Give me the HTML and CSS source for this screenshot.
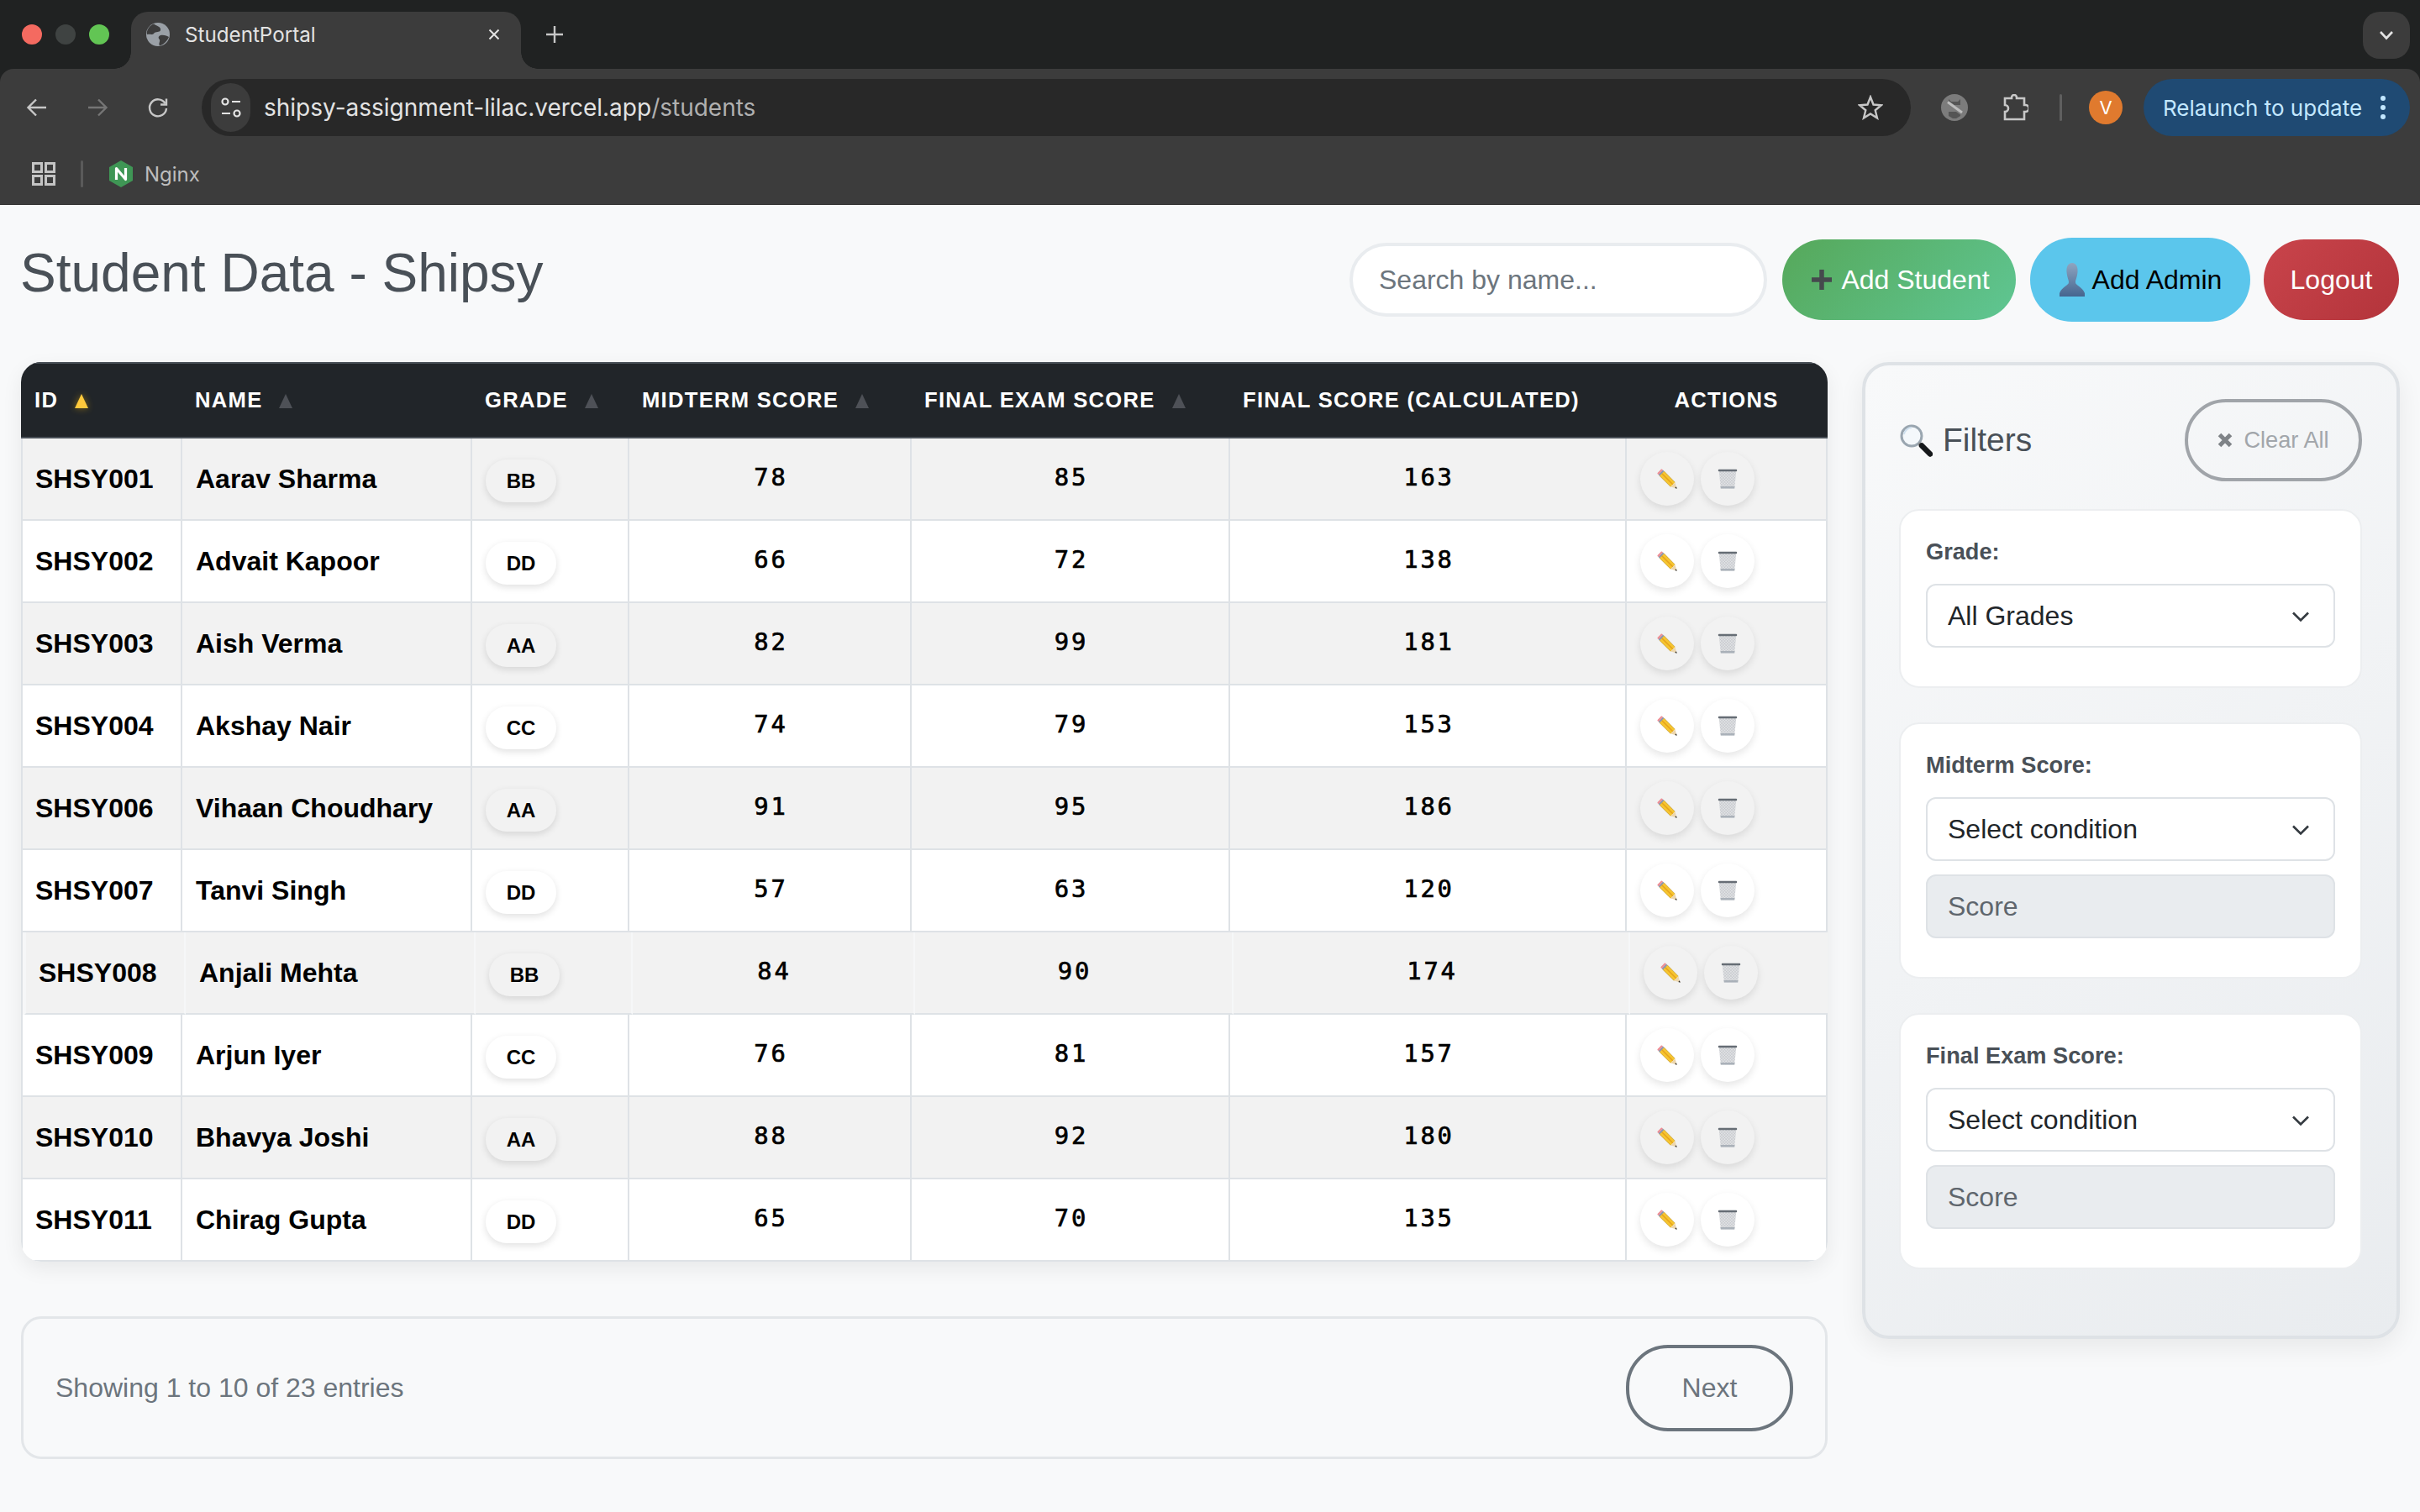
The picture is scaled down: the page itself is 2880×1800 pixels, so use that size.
FILE: index.html
```html
<!DOCTYPE html>
<html lang="en">
<head>
<meta charset="utf-8">
<title>StudentPortal</title>
<link rel="stylesheet" href="styles.css">
</head>
<body>
<svg class="defs" aria-hidden="true">
  <defs>
    <pattern id="mesh" width="2.4" height="2.4" patternUnits="userSpaceOnUse" patternTransform="rotate(45)">
      <rect width="2.4" height="2.4" fill="#e2e4e6"/>
      <path d="M0 0H2.4M0 0V2.4" stroke="#a9aeb4" stroke-width=".6"/>
    </pattern>
    <linearGradient id="bust" x1="0" y1="0" x2="0" y2="1">
      <stop offset="0" stop-color="#8fa5c0"/>
      <stop offset="1" stop-color="#45658f"/>
    </linearGradient>
    <symbol id="i-pencil" viewBox="0 0 24 24">
      <path d="M2.800 8.200 8.200 2.800 21.400 16.200 16.200 21.400Z" fill="#f6c52f"/>
      <path d="M5.500 5.500 18.800 18.800" stroke="#e5a21d" stroke-width="1.500"/>
      <path d="M2.800 8.200 16.200 21.400M8.200 2.800 21.400 16.200" stroke="#a87f1c" stroke-width=".5"/>
      <path d="M1.600 7 7 1.600 8.400 3 3 8.400Z" fill="#8b93a8"/>
      <path d="M.6 5 5 .6C5.600.2 6.200.6 7 1.600L1.600 7C.6 6.200.2 5.600.6 5Z" fill="#ee8c94"/>
      <path d="M16.200 21.400 21.400 16.200 23.600 23.600Z" fill="#ecd6ad"/>
      <path d="M21.300 22.900 22.900 21.300 23.700 23.700Z" fill="#222"/>
    </symbol>
    <symbol id="i-trash" viewBox="0 0 24 24">
      <path d="M1.800 3 22.200 3 20.200 23.400 3.800 23.400Z" fill="url(#mesh)"/>
      <path d="M3.500 21H20.500L20.200 23.400H3.800Z" fill="#aab1b9"/>
      <rect x=".8" y=".8" width="22.400" height="2.400" rx="1" fill="#666d75"/>
    </symbol>
    <symbol id="i-lens" viewBox="0 0 40 40">
      <circle cx="15" cy="15" r="12" fill="#f4f8fb" stroke="#9aa6b0" stroke-width="3"/>
      <path d="M6 13a9.500 9.500 0 0 1 9-8" fill="none" stroke="#cfe0ee" stroke-width="2"/>
      <path d="M23.500 23.500 27 27" stroke="#8e8e8e" stroke-width="3.500"/>
      <path d="M27 26.500 37 36.500" stroke="#15181b" stroke-width="6.500" stroke-linecap="round"/>
    </symbol>
    <symbol id="i-chevron" viewBox="0 0 22 14">
      <path d="M2 2.500 11 11.500 20 2.500" fill="none" stroke="#343a40" stroke-width="2.600"/>
    </symbol>
  </defs>
</svg>

<header class="browser">
  <div class="tabstrip">
    <div class="lights">
      <span class="light light-red"></span>
      <span class="light light-off"></span>
      <span class="light light-green"></span>
    </div>
    <div class="tab">
      <svg class="favicon" viewBox="0 0 28 28">
        <circle cx="14" cy="14" r="14" fill="#9aa0a6"/>
        <path d="M9 1.500C13 4 18 5 17 9 16 12 11 10 9 13 7 15 4 13 1 14 0 9 4 3 9 1.500ZM17 15C21 14 25 16 27 17 25 22 21 26 16 27.500 14 24 18 22 15 19 14 17.500 15 15.500 17 15Z" fill="#3c3c3c"/>
      </svg>
      <span class="tab-title">StudentPortal</span>
      <svg class="tab-close" viewBox="0 0 16 16"><path d="M2.500 2.500 13.500 13.500M13.500 2.500 2.500 13.500" stroke="#e3e3e3" stroke-width="2"/></svg>
    </div>
    <svg class="newtab" viewBox="0 0 22 22"><path d="M11 1V21M1 11H21" stroke="#c7c7c7" stroke-width="2.400"/></svg>
    <div class="tabmenu">
      <svg viewBox="0 0 18 12"><path d="M2 2 9 9.500 16 2" fill="none" stroke="#e3e3e3" stroke-width="2.600"/></svg>
    </div>
  </div>

  <div class="toolbar">
    <span class="tool"><svg viewBox="0 0 26 26"><path d="M24 13H3M12 3.500 2.500 13 12 22.500" fill="none" stroke="#c7c7c7" stroke-width="2.400"/></svg></span>
    <span class="tool"><svg viewBox="0 0 26 26"><path d="M2 13H23M14 3.500 23.500 13 14 22.500" fill="none" stroke="#757575" stroke-width="2.400"/></svg></span>
    <span class="tool"><svg viewBox="0 0 26 26"><path d="M21.500 8A10 10 0 1 0 23 14" fill="none" stroke="#c7c7c7" stroke-width="2.400"/><path d="M23 2.500V9.500H16" fill="none" stroke="#c7c7c7" stroke-width="2.400"/></svg></span>
    <div class="urlbar">
      <span class="siteinfo">
        <svg viewBox="0 0 26 26"><circle cx="6" cy="6" r="3.500" fill="none" stroke="#e3e3e3" stroke-width="2.200"/><path d="M14 6H24M2 20H12" stroke="#e3e3e3" stroke-width="2.200"/><circle cx="20" cy="20" r="3.500" fill="none" stroke="#e3e3e3" stroke-width="2.200"/></svg>
      </span>
      <span class="url">shipsy-assignment-lilac.vercel.app<span class="url-path">/students</span></span>
      <svg class="star" viewBox="0 0 30 30"><path d="M15 2.500 18.500 11.500 28 12.200 20.700 18.300 23 27.500 15 22.500 7 27.500 9.300 18.300 2 12.200 11.500 11.500Z" fill="none" stroke="#c7c7c7" stroke-width="2.400"/></svg>
    </div>
    <span class="tool tool-ext">
      <svg viewBox="0 0 32 32"><circle cx="16" cy="16" r="16" fill="#7c7c7c"/><path d="M9 6 12 9H20L23 6 23 13 9 13ZM9 21 23 21 23 26 18 29H14L9 26Z" fill="#555"/><path d="M7 10 25 23" stroke="#7c7c7c" stroke-width="5"/><path d="M8 9.500 25 22" stroke="#bdbdbd" stroke-width="3"/></svg>
    </span>
    <span class="tool tool-ext">
      <svg viewBox="0 0 32 32"><path d="M4 5H12V4A3 3 0 0 1 18 4V5H27V13H28.500A3 3 0 0 1 28.500 21H27V30H4V21A4 4 0 0 0 4 13Z" fill="none" stroke="#c7c7c7" stroke-width="2.600"/></svg>
    </span>
    <span class="tool-divider"></span>
    <span class="avatar">V</span>
    <div class="relaunch">
      <span>Relaunch to update</span>
      <span class="kebab"><i></i><i></i><i></i></span>
    </div>
  </div>

  <div class="bookmarks">
    <svg class="apps" viewBox="0 0 28 28"><path d="M1.500 1.500H11.500V11.500H1.500ZM16.500 1.500H26.500V11.500H16.500ZM1.500 16.500H11.500V26.500H1.500ZM16.500 16.500H26.500V26.500H16.500Z" fill="none" stroke="#c4c4c4" stroke-width="3"/></svg>
    <span class="bm-divider"></span>
    <svg class="nginx" viewBox="0 0 28 32"><path d="M14 0 28 8V24L14 32 0 24V8Z" fill="#3f9655"/><path d="M8.500 23V9.500L19.500 22.500V9" fill="none" stroke="#fff" stroke-width="3.200" stroke-linejoin="round"/></svg>
    <span class="bm-label">Nginx</span>
  </div>
</header>

<main class="page">
  <div class="page-head">
    <h1 class="page-title">Student Data - Shipsy</h1>
    <div class="page-actions">
      <input class="search" type="text" placeholder="Search by name...">
      <button class="btn btn-add" type="button"><svg class="btn-ico plus" viewBox="0 0 24 24"><path d="M12 0V24M0 12H24" stroke="#45494d" stroke-width="5.500"/></svg>Add Student</button>
      <button class="btn btn-admin" type="button"><svg class="btn-ico bust" viewBox="0 0 32 40"><path d="M16 0C21 0 23 5 22.500 11 22 17 20 20 20 23 20 27 28 28 31 36V40H1V36C4 28 12 27 12 23 12 20 10 17 9.500 11 9 5 11 0 16 0Z" fill="url(#bust)"/></svg>Add Admin</button>
      <button class="btn btn-logout" type="button">Logout</button>
    </div>
  </div>

  <div class="content">
    <div class="left">
      <div class="table-wrap">
        <table class="students">
          <colgroup>
            <col class="c-id"><col class="c-name"><col class="c-grade"><col class="c-mid"><col class="c-final"><col class="c-calc"><col class="c-act">
          </colgroup>
          <thead>
            <tr>
              <th>ID<span class="sort sort-on"></span></th>
              <th>NAME<span class="sort"></span></th>
              <th>GRADE<span class="sort"></span></th>
              <th>MIDTERM SCORE<span class="sort"></span></th>
              <th>FINAL EXAM SCORE<span class="sort"></span></th>
              <th>FINAL SCORE (CALCULATED)</th>
              <th class="th-center">ACTIONS</th>
            </tr>
          </thead>
          <tbody>
            <tr>
              <td class="id">SHSY001</td><td class="name">Aarav Sharma</td><td><span class="badge">BB</span></td><td class="num">78</td><td class="num">85</td><td class="num">163</td>
              <td class="acts"><span class="round"><svg><use href="#i-pencil"/></svg></span><span class="round"><svg><use href="#i-trash"/></svg></span></td>
            </tr>
            <tr>
              <td class="id">SHSY002</td><td class="name">Advait Kapoor</td><td><span class="badge">DD</span></td><td class="num">66</td><td class="num">72</td><td class="num">138</td>
              <td class="acts"><span class="round"><svg><use href="#i-pencil"/></svg></span><span class="round"><svg><use href="#i-trash"/></svg></span></td>
            </tr>
            <tr>
              <td class="id">SHSY003</td><td class="name">Aish Verma</td><td><span class="badge">AA</span></td><td class="num">82</td><td class="num">99</td><td class="num">181</td>
              <td class="acts"><span class="round"><svg><use href="#i-pencil"/></svg></span><span class="round"><svg><use href="#i-trash"/></svg></span></td>
            </tr>
            <tr>
              <td class="id">SHSY004</td><td class="name">Akshay Nair</td><td><span class="badge">CC</span></td><td class="num">74</td><td class="num">79</td><td class="num">153</td>
              <td class="acts"><span class="round"><svg><use href="#i-pencil"/></svg></span><span class="round"><svg><use href="#i-trash"/></svg></span></td>
            </tr>
            <tr>
              <td class="id">SHSY006</td><td class="name">Vihaan Choudhary</td><td><span class="badge">AA</span></td><td class="num">91</td><td class="num">95</td><td class="num">186</td>
              <td class="acts"><span class="round"><svg><use href="#i-pencil"/></svg></span><span class="round"><svg><use href="#i-trash"/></svg></span></td>
            </tr>
            <tr>
              <td class="id">SHSY007</td><td class="name">Tanvi Singh</td><td><span class="badge">DD</span></td><td class="num">57</td><td class="num">63</td><td class="num">120</td>
              <td class="acts"><span class="round"><svg><use href="#i-pencil"/></svg></span><span class="round"><svg><use href="#i-trash"/></svg></span></td>
            </tr>
            <tr class="is-hover">
              <td class="id">SHSY008</td><td class="name">Anjali Mehta</td><td><span class="badge">BB</span></td><td class="num">84</td><td class="num">90</td><td class="num">174</td>
              <td class="acts"><span class="round"><svg><use href="#i-pencil"/></svg></span><span class="round"><svg><use href="#i-trash"/></svg></span></td>
            </tr>
            <tr>
              <td class="id">SHSY009</td><td class="name">Arjun Iyer</td><td><span class="badge">CC</span></td><td class="num">76</td><td class="num">81</td><td class="num">157</td>
              <td class="acts"><span class="round"><svg><use href="#i-pencil"/></svg></span><span class="round"><svg><use href="#i-trash"/></svg></span></td>
            </tr>
            <tr>
              <td class="id">SHSY010</td><td class="name">Bhavya Joshi</td><td><span class="badge">AA</span></td><td class="num">88</td><td class="num">92</td><td class="num">180</td>
              <td class="acts"><span class="round"><svg><use href="#i-pencil"/></svg></span><span class="round"><svg><use href="#i-trash"/></svg></span></td>
            </tr>
            <tr>
              <td class="id">SHSY011</td><td class="name">Chirag Gupta</td><td><span class="badge">DD</span></td><td class="num">65</td><td class="num">70</td><td class="num">135</td>
              <td class="acts"><span class="round"><svg><use href="#i-pencil"/></svg></span><span class="round"><svg><use href="#i-trash"/></svg></span></td>
            </tr>
          </tbody>
        </table>
      </div>

      <div class="pager">
        <span class="pager-info">Showing 1 to 10 of 23 entries</span>
        <button class="btn-next" type="button">Next</button>
      </div>
    </div>

    <aside class="filters">
      <div class="filters-head">
        <h2 class="filters-title"><svg class="lens"><use href="#i-lens"/></svg>Filters</h2>
        <button class="btn-clear" type="button"><svg class="clear-x" viewBox="0 0 18 18"><path d="M2.500 2.500 15.500 15.500M15.500 2.500 2.500 15.500" stroke="#7f8387" stroke-width="5"/></svg>Clear All</button>
      </div>

      <section class="fcard">
        <label class="flabel">Grade:</label>
        <div class="selectwrap">
          <select class="fselect"><option>All Grades</option></select>
          <svg class="chev"><use href="#i-chevron"/></svg>
        </div>
      </section>

      <section class="fcard">
        <label class="flabel">Midterm Score:</label>
        <div class="selectwrap">
          <select class="fselect"><option>Select condition</option></select>
          <svg class="chev"><use href="#i-chevron"/></svg>
        </div>
        <input class="fscore" type="text" placeholder="Score" disabled>
      </section>

      <section class="fcard">
        <label class="flabel">Final Exam Score:</label>
        <div class="selectwrap">
          <select class="fselect"><option>Select condition</option></select>
          <svg class="chev"><use href="#i-chevron"/></svg>
        </div>
        <input class="fscore" type="text" placeholder="Score" disabled>
      </section>
    </aside>
  </div>
</main>
</body>
</html>
```

FILE: styles.css
```css
* { box-sizing: border-box; }
html, body { margin: 0; height: 1800px; overflow: hidden; }
body { background: #f8f9fa; font-family: "Liberation Sans", Arial, sans-serif; color: #212529; }
.defs { position: absolute; width: 0; height: 0; }

/* browser chrome */
.browser { background: #202222; font-family: Inter, "Liberation Sans", sans-serif; }
.tabstrip { display: flex; align-items: flex-start; height: 82px; padding-top: 14px; }
.lights { display: flex; gap: 16px; margin: 15px 0 0 26px; }
.light { width: 24px; height: 24px; border-radius: 50%; }
.light-red { background: #f46a60; }
.light-off { background: #3f4342; }
.light-green { background: #62c554; }
.tab { position: relative; display: flex; align-items: center; width: 464px; height: 68px; margin-left: 26px; padding: 0 24px 14px 18px; background: #3c3c3c; border-radius: 20px 20px 0 0; }
.tab::before, .tab::after { content: ""; position: absolute; bottom: 0; width: 20px; height: 20px; }
.tab::before { left: -20px; background: radial-gradient(circle at 0 0, transparent 19.500px, #3c3c3c 20px); }
.tab::after { right: -20px; background: radial-gradient(circle at 100% 0, transparent 19.500px, #3c3c3c 20px); }
.favicon { width: 28px; height: 28px; flex: none; }
.tab-title { margin-left: 18px; font-size: 24.200px; color: #e3e3e3; }
.tab-close { width: 16px; height: 16px; margin-left: auto; }
.newtab { width: 22px; height: 22px; margin: 16px 0 0 29px; }
.tabmenu { display: flex; align-items: center; justify-content: center; width: 56px; height: 56px; margin: 0 12px 0 auto; background: #3c3c3c; border-radius: 20px; }
.tabmenu svg { width: 18px; height: 12px; }

.toolbar { display: flex; align-items: center; height: 80px; padding: 12px 12px 0 8px; background: #3c3c3c; border-radius: 16px 16px 0 0; }
.tool { display: flex; flex: none; align-items: center; justify-content: center; width: 72px; height: 68px; }
.tool svg { width: 26px; height: 26px; }
.tool-ext svg { width: 32px; height: 32px; }
.urlbar { display: flex; flex: none; align-items: center; width: 2034px; height: 68px; margin: 0 16px; padding: 0 33px 0 11px; background: #282828; border-radius: 34px; }
.siteinfo { display: flex; align-items: center; justify-content: center; width: 47px; height: 58px; background: #3c3c3c; border-radius: 29px; }
.siteinfo svg { width: 26px; height: 26px; }
.url { margin-left: 16px; font-size: 28px; color: #e3e3e3; }
.url-path { color: #b0b0b0; }
.star { width: 30px; height: 30px; margin-left: auto; }
.tool-divider { flex: none; width: 3px; height: 32px; margin-left: 17px; background: #5f5f5f; border-radius: 2px; }
.avatar { display: flex; flex: none; align-items: center; justify-content: center; width: 40px; height: 40px; margin-left: 32px; background: #e07a2e; border-radius: 50%; color: #fff; font-size: 22px; }
.relaunch { display: flex; flex: none; align-items: center; width: 317px; height: 68px; margin-left: 25px; padding: 0 29px 0 23px; background: #1f4a73; border-radius: 34px; color: #c2e7ff; font-size: 26px; white-space: nowrap; }
.kebab { display: flex; flex-direction: column; gap: 5px; margin-left: auto; }
.kebab i { width: 6px; height: 6px; background: #c2e7ff; border-radius: 50%; }

.bookmarks { display: flex; align-items: center; height: 82px; padding: 9px 0 0 38px; background: #3c3c3c; border-bottom: 1px solid #333; }
.apps { width: 28px; height: 28px; }
.bm-divider { width: 3px; height: 32px; margin-left: 30px; background: #5a5a5a; border-radius: 2px; }
.nginx { width: 28px; height: 32px; margin-left: 31px; }
.bm-label { margin-left: 14px; font-size: 24px; color: #bdbdbd; }

/* page */
.page { padding: 39px 25px 0; }
.page-head { display: flex; align-items: center; justify-content: space-between; height: 100px; margin-bottom: 48px; }
.page-title { margin: 0 0 16px -1px; font-size: 64px; font-weight: 400; line-height: 1.2; color: #495057; }
.page-actions { display: flex; align-items: center; }
.search { width: 497px; height: 88px; margin-right: 18px; padding: 0 30px 0 31px; background: #fff; border: 4px solid #e9ecef; border-radius: 44px; font: 32px "Liberation Sans", Arial, sans-serif; color: #495057; outline: 0; }
.search::placeholder { color: #6c757d; opacity: 1; }
.btn { display: flex; align-items: center; justify-content: center; height: 96px; padding: 0; border: 0; border-radius: 48px; font: 32px "Liberation Sans", Arial, sans-serif; color: #fff; }
.btn-ico { flex: none; }
.btn-add { width: 278px; padding-left: 4px; background: linear-gradient(135deg, #56a85a, #5fc693); }
.plus { width: 24px; height: 24px; margin-right: 11px; }
.btn-admin { width: 262px; height: 100px; margin-left: 17px; background: #5bc6ec; border-radius: 50px; color: #000; }
.bust { width: 32px; height: 40px; margin-right: 8px; }
.btn-logout { width: 161px; margin-left: 16px; background: linear-gradient(135deg, #c9444b, #b3343b); }

.content { display: flex; align-items: flex-start; gap: 41px; }
.left { width: 2150px; }

.table-wrap { border-radius: 24px; overflow: hidden; box-shadow: 0 8px 24px rgba(0, 0, 0, .07); }
.students { width: 2150px; table-layout: fixed; border-collapse: separate; border-spacing: 0; }
.c-id { width: 192px; }
.c-name { width: 345px; }
.c-grade { width: 187px; }
.c-mid { width: 336px; }
.c-final { width: 379px; }
.c-calc { width: 472px; }
.c-act { width: 239px; }
.students th { height: 91px; padding: 0 0 0 15px; background: #212529; border-top: 2px solid #495057; border-bottom: 2px solid #495057; font-size: 25.600px; font-weight: 700; letter-spacing: 1.280px; color: #fff; text-align: left; white-space: nowrap; }
.students th:first-child { padding-left: 16px; }
.students th.th-center { padding: 0 2px 0 0; text-align: center; }
.sort { display: inline-block; margin-left: 20px; border-left: 8.500px solid transparent; border-right: 8.500px solid transparent; border-bottom: 17px solid #4e5157; vertical-align: -1px; }
.sort-on { border-bottom-color: #ffc93c; filter: drop-shadow(0 0 4px rgba(255, 193, 7, .45)); }
.students td { height: 98px; padding: 0 0 0 16px; background: #fff; border-right: 2px solid #dee2e6; border-bottom: 2px solid #dee2e6; }
.students td:first-child { padding-left: 15px; border-left: 2px solid #dee2e6; }
.students tbody tr:nth-child(odd) td { background: #f2f2f2; }
.students tr.is-hover { transform: translateX(4px); }
.students tr.is-hover td { border-right-color: #f6f7f8; }
.students tr.is-hover td:first-child { border-left-color: #f6f7f8; box-shadow: -2px 0 0 #f6f7f8, -4px 0 0 #dee2e6; }
.id { font-size: 32px; font-weight: 700; color: #000; }
.name { font-size: 32px; font-weight: 700; color: #000; }
.badge { display: inline-flex; align-items: center; justify-content: center; width: 84px; height: 51px; margin-top: 5px; border-radius: 25px; box-shadow: 0 3px 8px rgba(0, 0, 0, .12); font-size: 24px; font-weight: 700; color: #000; }
.students td.num { padding: 0 0 5px 3px; font-family: "DejaVu Sans Mono", monospace; font-size: 28.800px; font-weight: 400; letter-spacing: 2.880px; -webkit-text-stroke: .7px #000; text-align: center; color: #000; }
.acts { white-space: nowrap; font-size: 0; }
.round { display: inline-flex; align-items: center; justify-content: center; width: 64px; height: 64px; margin-right: 8px; border-radius: 50%; box-shadow: 0 4px 10px rgba(0, 0, 0, .1); vertical-align: middle; }
.round svg { width: 24px; height: 24px; }
.students tbody tr:nth-child(odd) .round, .students tbody tr:nth-child(odd) .badge { background: #f2f2f2; }
.students tbody tr:nth-child(even) .round, .students tbody tr:nth-child(even) .badge { background: #fff; }

.pager { display: flex; align-items: center; justify-content: space-between; height: 170px; margin-top: 65px; padding: 0 38px 0 38px; border: 3px solid #e3e6e9; border-radius: 24px; }
.pager-info { font-size: 32px; color: #6c757d; }
.btn-next { width: 199px; height: 103px; background: transparent; border: 4px solid #6c757d; border-radius: 50px; font: 32px "Liberation Sans", Arial, sans-serif; color: #6c757d; }

/* filter panel */
.filters { width: 640px; height: 1163px; padding: 40px 41px 0 40px; background: linear-gradient(145deg, #f8f9fa, #e9ecef); border: 4px solid #dee2e6; border-radius: 32px; box-shadow: 0 10px 30px rgba(0, 0, 0, .07); }
.filters-head { display: flex; align-items: center; justify-content: space-between; height: 98px; margin-bottom: 33px; }
.filters-title { display: flex; align-items: center; margin: 0; font-size: 39px; font-weight: 400; color: #495057; }
.lens { width: 40px; height: 40px; margin-right: 12px; }
.btn-clear { display: flex; align-items: center; justify-content: center; width: 211px; height: 98px; padding: 0; background: transparent; border: 4px solid #a0a4a9; border-radius: 49px; font: 27.200px "Liberation Sans", Arial, sans-serif; color: #a2a6ab; }
.clear-x { width: 18px; height: 18px; margin-right: 13px; }
.fcard { margin-bottom: 41px; padding: 32px 30px 46px; background: #fff; border: 2px solid #eceef0; border-radius: 24px; }
.flabel { display: block; margin-bottom: 21px; font-size: 27.200px; font-weight: 700; line-height: 34px; color: #495057; }
.selectwrap { position: relative; }
.fselect { display: block; width: 487px; height: 76px; padding: 0 24px; appearance: none; background: #fff; border: 2px solid #dee2e6; border-radius: 12px; font: 32px "Liberation Sans", Arial, sans-serif; color: #212529; }
.chev { position: absolute; right: 30px; top: 32px; width: 22px; height: 14px; }
.fscore { display: block; width: 487px; height: 76px; margin-top: 16px; padding: 0 24px; background: #e9ecef; border: 2px solid #dee2e6; border-radius: 12px; font: 32px "Liberation Sans", Arial, sans-serif; }
.fscore::placeholder { color: #5f666d; opacity: 1; }
```
